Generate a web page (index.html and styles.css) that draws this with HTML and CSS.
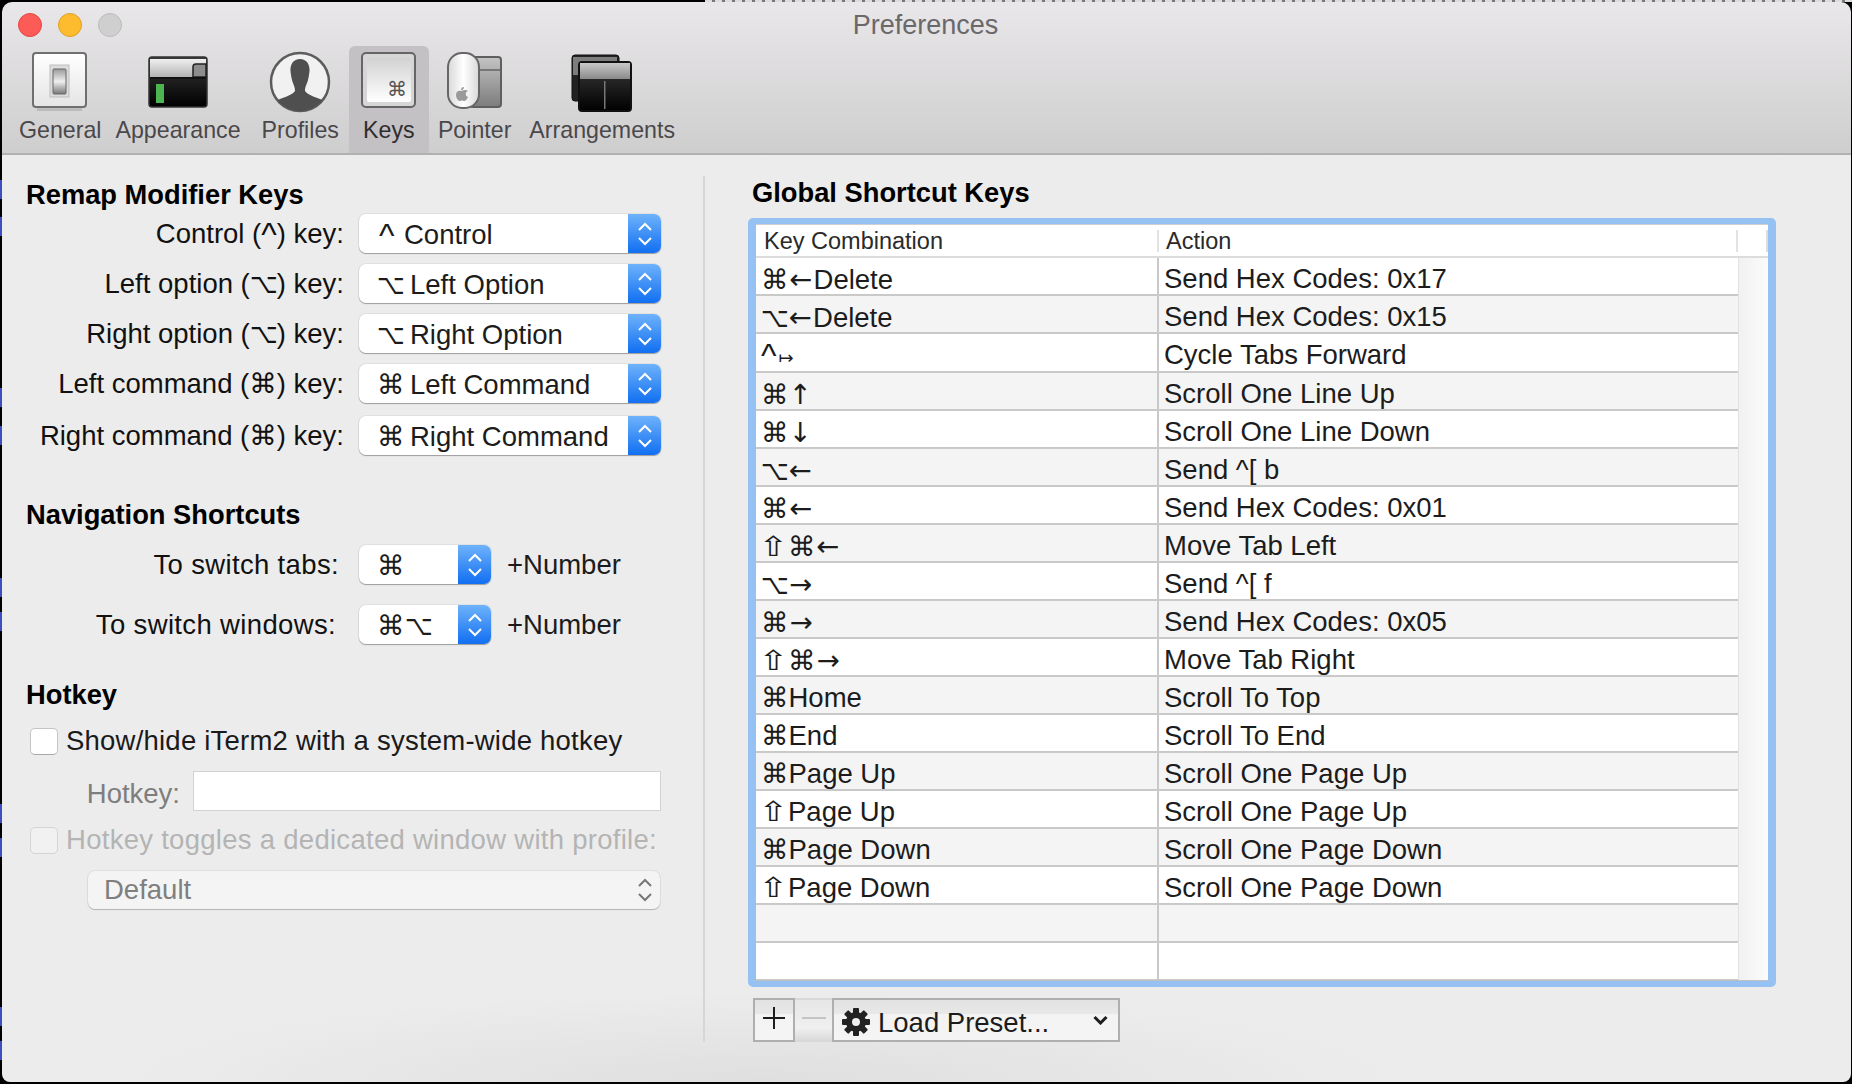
FILE: index.html
```html
<!DOCTYPE html>
<html lang="en">
<head>
  <meta charset="UTF-8">
  <title>Preferences</title>
  <link rel="stylesheet" href="styles.css">
</head>
<body>

<div class="desk-top"></div>

<div class="stage">
  <div class="desk-edge">
    <i style="margin-top:178px"></i>
    <i style="margin-top:18px"></i>
    <i style="margin-top:152px"></i>
    <i style="margin-top:19px"></i>
    <i style="margin-top:133px"></i>
    <i style="margin-top:15px"></i>
    <i style="margin-top:173px"></i>
    <i style="margin-top:15px"></i>
    <i style="margin-top:150px"></i>
    <i style="margin-top:15px"></i>
  </div>

  <div class="window">
    <header class="toolbar">
      <div class="titlebar">
        <div class="lights">
          <span class="light red"></span>
          <span class="light yellow"></span>
          <span class="light grey"></span>
        </div>
        <div class="title">Preferences</div>
      </div>

      <nav class="tools">
        <div class="tool">
          <svg class="tool-icon" width="56" height="62" viewBox="0 0 56 62">
            <defs>
              <linearGradient id="plate" x1="0" y1="0" x2="0" y2="1"><stop offset="0" stop-color="#fff"/><stop offset="1" stop-color="#e4e4e4"/></linearGradient>
              <linearGradient id="lever" x1="0" y1="0" x2="0" y2="1"><stop offset="0" stop-color="#9a9a9a"/><stop offset=".5" stop-color="#efefef"/><stop offset="1" stop-color="#777"/></linearGradient>
            </defs>
            <rect x="1" y="2" width="53" height="54" rx="3" fill="url(#plate)" stroke="#6f6f6f" stroke-width="2"/>
            <rect x="18" y="14" width="19" height="32" fill="#dcdcdc" stroke="#bdbdbd"/>
            <rect x="21" y="18" width="13" height="25" rx="1" fill="url(#lever)" stroke="#666"/>
            <rect x="5" y="57" width="45" height="3" fill="#000" opacity=".12"/>
          </svg>
          <span>General</span>
        </div>

        <div class="tool">
          <svg class="tool-icon" width="60" height="62" viewBox="0 0 60 62">
            <defs>
              <linearGradient id="termbar" x1="0" y1="0" x2="0" y2="1"><stop offset="0" stop-color="#f0f0f0"/><stop offset="1" stop-color="#b4b4b4"/></linearGradient>
              <linearGradient id="termbody" x1="0" y1="0" x2="0" y2="1"><stop offset="0" stop-color="#3a3a3a"/><stop offset="1" stop-color="#000"/></linearGradient>
            </defs>
            <rect x="1" y="6" width="58" height="50" rx="3" fill="url(#termbody)" stroke="#333" stroke-width="1.5"/>
            <rect x="2" y="8" width="56" height="18" fill="url(#termbar)"/>
            <path d="M45 26V16q0-3 3-3H58V26Z" fill="#8d8d8d" stroke="#222" stroke-width="1.5"/>
            <rect x="2" y="26" width="56" height="2" fill="#111"/>
            <rect x="8" y="33" width="8" height="19" fill="#4cb550"/>
          </svg>
          <span>Appearance</span>
        </div>

        <div class="tool tool-profiles">
          <svg class="tool-icon" width="62" height="62" viewBox="0 0 62 62">
            <defs>
              <clipPath id="oval"><ellipse cx="31" cy="31" rx="29" ry="29"/></clipPath>
            </defs>
            <ellipse cx="31" cy="31" rx="29" ry="29" fill="#f1f1f1" stroke="#5c5c5c" stroke-width="2.500"/>
            <g clip-path="url(#oval)">
              <path d="M31 8c-7 0-10 6-9.500 12 .3 3 1 7 1.500 9 1 4 3 6 3 11-3 4-10 6-15 8-3 1-5 5-6 14h52c-1-9-3-13-6-14-5-2-12-4-15-8 0-5 2-7 3-11 .5-2 1.200-6 1.500-9C41 14 38 8 31 8Z" fill="#4f4f4f"/>
            </g>
          </svg>
          <span>Profiles</span>
        </div>

        <div class="tool selected">
          <svg class="tool-icon" width="56" height="62" viewBox="0 0 56 62">
            <defs>
              <linearGradient id="keycap" x1="0" y1="0" x2="0" y2="1"><stop offset="0" stop-color="#d2d2d2"/><stop offset="1" stop-color="#fff"/></linearGradient>
            </defs>
            <rect x="1" y="2" width="53" height="54" rx="4" fill="#d6d6d6" stroke="#656565" stroke-width="2"/>
            <rect x="6" y="7" width="44" height="44" rx="2" fill="url(#keycap)"/>
            <text class="key-glyph" x="26" y="45">⌘</text>
          </svg>
          <span>Keys</span>
        </div>

        <div class="tool tool-pointer">
          <svg class="tool-icon" width="58" height="62" viewBox="0 0 58 62">
            <defs>
              <linearGradient id="mouse" x1="0" y1="0" x2="1" y2="0"><stop offset="0" stop-color="#d8d8d8"/><stop offset=".5" stop-color="#fff"/><stop offset="1" stop-color="#d8d8d8"/></linearGradient>
              <linearGradient id="back" x1="0" y1="0" x2="0" y2="1"><stop offset="0" stop-color="#c4c4c4"/><stop offset="1" stop-color="#7c7c7c"/></linearGradient>
            </defs>
            <rect x="24" y="6" width="31" height="50" rx="3" fill="url(#back)" stroke="#5f5f5f" stroke-width="2"/>
            <rect x="32" y="18" width="22" height="2" fill="#777"/>
            <rect x="2" y="2" width="31" height="55" rx="14" fill="url(#mouse)" stroke="#666" stroke-width="2"/>
            <path d="M15 40c-2-1-5 0-5 4 0 3 2 6 4 6 1 0 1-.5 2-.5s1 .5 2 .5c2 0 3-2 4-4-3-1-3-5 0-6-1-1-2-1-3-1-1 0-2 .5-3 .5zM15 39c0-2 1-3 3-3 0 2-1 3-3 3z" fill="#9a9a9a"/>
          </svg>
          <span>Pointer</span>
        </div>

        <div class="tool tool-arrange">
          <svg class="tool-icon" width="62" height="62" viewBox="0 0 62 62">
            <defs>
              <linearGradient id="front" x1="0" y1="0" x2="0" y2="1"><stop offset="0" stop-color="#3c3c3c"/><stop offset="1" stop-color="#000"/></linearGradient>
              <linearGradient id="frontbar" x1="0" y1="0" x2="0" y2="1"><stop offset="0" stop-color="#c9c9c9"/><stop offset="1" stop-color="#8a8a8a"/></linearGradient>
            </defs>
            <rect x="1" y="4" width="47" height="46" rx="3" fill="#222" stroke="#111"/>
            <rect x="2" y="6" width="44" height="18" fill="#7d7d7d"/>
            <rect x="8" y="11" width="52" height="49" rx="3" fill="url(#front)" stroke="#111" stroke-width="2"/>
            <rect x="9" y="12" width="50" height="16" fill="url(#frontbar)"/>
            <rect x="33" y="30" width="1.500" height="28" fill="#777"/>
          </svg>
          <span>Arrangements</span>
        </div>
      </nav>
    </header>

    <main class="content">
      <section class="left-col">
        <h3>Remap Modifier Keys</h3>
        <div class="form-row">
          <label class="row-label">Control (<span class="ctl">^</span>) key:</label>
          <div class="popup"><span class="popup-text"><span class="mod mod-ctl"><span class="ctl">^</span></span>Control</span><span class="stepper"><svg width="18" height="28" viewBox="0 0 18 28"><path d="M3 10l6-6 6 6M3 18l6 6 6-6"/></svg></span></div>
        </div>
        <div class="form-row">
          <label class="row-label">Left option (<span class="opt">⌥</span>) key:</label>
          <div class="popup"><span class="popup-text"><span class="mod"><span class="opt">⌥</span></span>Left Option</span><span class="stepper"><svg width="18" height="28" viewBox="0 0 18 28"><path d="M3 10l6-6 6 6M3 18l6 6 6-6"/></svg></span></div>
        </div>
        <div class="form-row">
          <label class="row-label">Right option (<span class="opt">⌥</span>) key:</label>
          <div class="popup"><span class="popup-text"><span class="mod"><span class="opt">⌥</span></span>Right Option</span><span class="stepper"><svg width="18" height="28" viewBox="0 0 18 28"><path d="M3 10l6-6 6 6M3 18l6 6 6-6"/></svg></span></div>
        </div>
        <div class="form-row">
          <label class="row-label">Left command (⌘) key:</label>
          <div class="popup"><span class="popup-text"><span class="mod">⌘</span>Left Command</span><span class="stepper"><svg width="18" height="28" viewBox="0 0 18 28"><path d="M3 10l6-6 6 6M3 18l6 6 6-6"/></svg></span></div>
        </div>
        <div class="form-row last">
          <label class="row-label">Right command (⌘) key:</label>
          <div class="popup"><span class="popup-text"><span class="mod">⌘</span>Right Command</span><span class="stepper"><svg width="18" height="28" viewBox="0 0 18 28"><path d="M3 10l6-6 6 6M3 18l6 6 6-6"/></svg></span></div>
        </div>

        <h3 class="nav-head">Navigation Shortcuts</h3>
        <div class="form-row nav-row">
          <label class="row-label tabs-label">To switch tabs:</label>
          <div class="popup small"><span class="popup-text">⌘</span><span class="stepper"><svg width="18" height="28" viewBox="0 0 18 28"><path d="M3 10l6-6 6 6M3 18l6 6 6-6"/></svg></span></div>
          <span class="suffix">+Number</span>
        </div>
        <div class="form-row nav-row">
          <label class="row-label windows-label">To switch windows:</label>
          <div class="popup small"><span class="popup-text">⌘<span class="opt">⌥</span></span><span class="stepper"><svg width="18" height="28" viewBox="0 0 18 28"><path d="M3 10l6-6 6 6M3 18l6 6 6-6"/></svg></span></div>
          <span class="suffix">+Number</span>
        </div>

        <h3 class="hotkey-head">Hotkey</h3>
        <div class="check-row">
          <span class="checkbox"></span>
          <span>Show/hide iTerm2 with a system-wide hotkey</span>
        </div>
        <div class="hotkey-row">
          <label class="hotkey-label">Hotkey:</label>
          <div class="hotkey-field"></div>
        </div>
        <div class="check-row disabled">
          <span class="checkbox"></span>
          <span>Hotkey toggles a dedicated window with profile:</span>
        </div>
        <div class="profile-select">
          <span>Default</span>
          <svg width="18" height="28" viewBox="0 0 18 28"><path d="M3 10l6-6 6 6M3 18l6 6 6-6"/></svg>
        </div>
      </section>

      <section class="right-col">
        <h3>Global Shortcut Keys</h3>
        <div class="focus-box">
          <div class="list-head">
            <span class="head-key">Key Combination</span>
            <span class="head-action">Action</span>
            <span class="head-end"></span>
          </div>
          <div class="list-body">
            <table class="keys-table">
              <tr><td>⌘<span class="arrow">←</span>Delete</td><td>Send Hex Codes: 0x17</td></tr>
              <tr><td><span class="opt">⌥</span><span class="arrow">←</span>Delete</td><td>Send Hex Codes: 0x15</td></tr>
              <tr><td><span class="ctl">^</span><span class="tab-arrow">↦</span></td><td>Cycle Tabs Forward</td></tr>
              <tr><td>⌘<span class="arrow vert">↑</span></td><td>Scroll One Line Up</td></tr>
              <tr><td>⌘<span class="arrow vert">↓</span></td><td>Scroll One Line Down</td></tr>
              <tr><td><span class="opt">⌥</span><span class="arrow">←</span></td><td>Send ^[ b</td></tr>
              <tr><td>⌘<span class="arrow">←</span></td><td>Send Hex Codes: 0x01</td></tr>
              <tr><td><span class="shift">⇧</span>⌘<span class="arrow">←</span></td><td>Move Tab Left</td></tr>
              <tr><td><span class="opt">⌥</span><span class="arrow">→</span></td><td>Send ^[ f</td></tr>
              <tr><td>⌘<span class="arrow">→</span></td><td>Send Hex Codes: 0x05</td></tr>
              <tr><td><span class="shift">⇧</span>⌘<span class="arrow">→</span></td><td>Move Tab Right</td></tr>
              <tr><td>⌘Home</td><td>Scroll To Top</td></tr>
              <tr><td>⌘End</td><td>Scroll To End</td></tr>
              <tr><td>⌘Page Up</td><td>Scroll One Page Up</td></tr>
              <tr><td><span class="shift">⇧</span>Page Up</td><td>Scroll One Page Up</td></tr>
              <tr><td>⌘Page Down</td><td>Scroll One Page Down</td></tr>
              <tr><td><span class="shift">⇧</span>Page Down</td><td>Scroll One Page Down</td></tr>
              <tr><td></td><td></td></tr>
              <tr><td></td><td></td></tr>
            </table>
            <div class="scroll-track"></div>
          </div>
        </div>

        <div class="button-bar">
          <button class="bar-btn plus" type="button">
            <svg width="24" height="24" viewBox="0 0 24 24"><path d="M12 1v22M1 12h22"/></svg>
          </button>
          <button class="bar-btn minus" type="button">
            <svg width="24" height="24" viewBox="0 0 24 24"><path d="M0 12h24"/></svg>
          </button>
          <button class="bar-btn preset" type="button">
            <svg class="gear" width="28" height="28" viewBox="0 0 28 28">
              <g fill="#222">
                <rect x="11" y="0" width="6" height="28" rx="1"/>
                <rect x="11" y="0" width="6" height="28" rx="1" transform="rotate(45 14 14)"/>
                <rect x="11" y="0" width="6" height="28" rx="1" transform="rotate(90 14 14)"/>
                <rect x="11" y="0" width="6" height="28" rx="1" transform="rotate(135 14 14)"/>
              </g>
              <circle cx="14" cy="14" r="7.500" fill="none" stroke="#222" stroke-width="5"/>
              <circle cx="14" cy="14" r="4" fill="#efefef"/>
            </svg>
            <span class="preset-text">Load Preset...</span>
            <svg class="caret" width="15" height="10" viewBox="0 0 15 10"><path d="M1.500 2l6 6 6-6"/></svg>
          </button>
        </div>
      </section>
    </main>
  </div>
</div>

</body>
</html>
```

FILE: styles.css
```css
html, body {
  margin: 0;
  height: 100%;
}
body {
  width: 1852px;
  height: 1084px;
  overflow: hidden;
  background: #000;
  font-family: 'Liberation Sans', 'DejaVu Sans', sans-serif;
  font-size: 27.5px;
  color: #1c1c1c;
}
.desk-top {
  height: 2px;
  margin-left: 705px;
  background: repeating-linear-gradient(90deg, #dcdcdc 0, #dcdcdc 7px, #777 7px, #777 10px);
}
.stage {
  display: flex;
  height: 1080px;
}
.desk-edge {
  width: 2px;
  display: flex;
  flex-direction: column;
}
.desk-edge i {
  display: block;
  height: 19px;
  background: #3d4fc0;
  flex: none;
}
.window {
  width: 1849px;
  height: 1080px;
  border-radius: 10px 10px 8px 8px;
  overflow: hidden;
  display: flex;
  flex-direction: column;
}

/* toolbar */
.toolbar {
  height: 154px;
  box-sizing: border-box;
  background: linear-gradient(#e9e7e9, #cfcecf);
  border-bottom: 2px solid #b2b1b2;
  display: flex;
  flex-direction: column;
}
.titlebar {
  display: grid;
  grid-template-columns: 1fr auto 1fr;
  align-items: center;
  height: 44px;
}
.lights {
  display: flex;
  gap: 16px;
  padding-left: 16px;
}
.light {
  width: 24px;
  height: 24px;
  border-radius: 50%;
  box-sizing: border-box;
}
.red { background: #fc5b57; border: 1px solid #e2463f; }
.yellow { background: #fdbb2e; border: 1px solid #e0a028; }
.grey { background: #d0cfd0; border: 1px solid #bcbbbc; }
.title {
  font-size: 27px;
  line-height: 46px;
  color: #6a686a;
  text-align: center;
  grid-column: 2;
  margin-left: -2px;
}
.tools {
  flex: 1;
  display: flex;
  padding-left: 10px;
}
.tool {
  display: flex;
  flex-direction: column;
  align-items: center;
  padding: 5px 7px 0;
  font-size: 23.2px;
  color: #4a484a;
}
.tool-icon {
  display: block;
  height: 62px;
  margin-bottom: 3px;
}
.tool span {
  line-height: 28px;
}
.tool-profiles { margin-left: 7px; }
.tool-pointer { margin-left: 2px; }
.tool-arrange { margin-left: 4px; }
.tool.selected {
  width: 80px;
  box-sizing: border-box;
  padding: 5px 0 0;
  margin-left: 3px;
  background: #c3c1c3;
  border-radius: 6px 6px 0 0;
  color: #2f2d2f;
}
.key-glyph {
  font-family: 'DejaVu Sans', sans-serif;
  font-size: 20px;
  fill: #555;
}

/* main area */
.content {
  flex: 1;
  display: flex;
  padding: 21px 0 40px;
  background: radial-gradient(ellipse 640px 90px at 760px 100%, #dfdfdf, rgba(223,223,223,0)), #ececec;
}
h3 {
  margin: 0;
  font-size: 27.3px;
  line-height: 34px;
  color: #000;
}

/* modifier glyphs */
.opt {
  display: inline-block;
  width: 31px;
  margin-right: -4px;
  transform: scaleX(.88);
  transform-origin: left;
}
.ctl {
  display: inline-block;
  font-size: 33px;
  line-height: 20px;
  vertical-align: -3px;
}
.shift {
  display: inline-block;
  width: 23px;
  margin: 0 7px 0 -3px;
  transform: scaleX(1.3);
  transform-origin: left;
}
.arrow {
  font-family: 'DejaVu Sans', sans-serif;
  margin-left: 1px;
  margin-right: 1px;
}
.arrow.vert {
  margin-left: 0;
}
.mod {
  display: inline-block;
  width: 33px;
}
.mod-ctl {
  width: 27px;
  padding-left: 2px;
  box-sizing: border-box;
}

/* left column */
.left-col {
  width: 703px;
  box-sizing: border-box;
  padding-left: 24px;
  padding-top: 2px;
  border-right: 2px solid #d6d6d6;
}
.form-row {
  display: flex;
  align-items: center;
  height: 39px;
  margin-top: 11px;
}
.left-col h3 + .form-row {
  margin-top: 2px;
}
.form-row.last {
  margin-top: 13px;
}
.row-label {
  width: 318px;
  text-align: right;
  margin-right: 15px;
  color: #111;
  white-space: nowrap;
  line-height: 43px;
}
.popup {
  width: 302px;
  height: 39px;
  box-sizing: border-box;
  display: flex;
  background: #fff;
  border-radius: 7px;
  box-shadow: 0 1px 1px rgba(0,0,0,0.3), 0 0 0 1px rgba(0,0,0,0.05);
  overflow: hidden;
}
.popup-text {
  flex: 1;
  padding-left: 18px;
  line-height: 41px;
  white-space: nowrap;
}
.stepper {
  width: 33px;
  display: flex;
  align-items: center;
  justify-content: center;
  background: linear-gradient(#6eb2fb, #116ff1);
}
.stepper svg path {
  fill: none;
  stroke: #fff;
  stroke-width: 2;
}
.nav-head {
  margin-top: 43px;
}
.nav-row {
  margin-top: 21px;
}
.left-col .nav-head + .nav-row {
  margin-top: 13px;
}
.tabs-label {
  width: 313px;
  margin-right: 20px;
  letter-spacing: .35px;
}
.windows-label {
  width: 310px;
  margin-right: 23px;
  letter-spacing: .35px;
}
.popup.small {
  width: 132px;
}
.suffix {
  margin-left: 16px;
  line-height: 41px;
}
.hotkey-head {
  margin-top: 34px;
}
.check-row {
  display: flex;
  align-items: center;
  gap: 8px;
  height: 28px;
  margin: 15px 0 0 4px;
  color: #1a1a1a;
  white-space: nowrap;
  letter-spacing: .22px;
  line-height: 30px;
}
.checkbox {
  width: 28px;
  height: 27px;
  box-sizing: border-box;
  background: #fff;
  border: 1px solid #c4c4c4;
  border-bottom-color: #a8a8a8;
  border-radius: 5px;
}
.hotkey-row {
  display: flex;
  margin-top: 16px;
}
.hotkey-label {
  width: 154px;
  height: 40px;
  text-align: right;
  margin-right: 13px;
  color: #7e7e7e;
  line-height: 46px;
}
.hotkey-field {
  width: 468px;
  height: 40px;
  box-sizing: border-box;
  background: #fff;
  border: 1px solid #d2d2d2;
}
.check-row.disabled {
  margin-top: 15px;
  color: #b4b4b4;
  letter-spacing: .28px;
}
.check-row.disabled .checkbox {
  background: #f1f1f1;
  border-color: #d4d4d4;
}
.profile-select {
  display: flex;
  align-items: center;
  justify-content: space-between;
  width: 572px;
  height: 38px;
  box-sizing: border-box;
  margin: 17px 0 0 62px;
  padding: 0 6px 0 16px;
  color: #7f7f7f;
  background: #f4f4f4;
  border-radius: 7px;
  box-shadow: 0 1px 1px rgba(0,0,0,0.2), 0 0 0 1px rgba(0,0,0,0.05);
}
.profile-select span {
  line-height: 40px;
}
.profile-select path {
  fill: none;
  stroke: #777;
  stroke-width: 2;
}

/* right column */
.right-col {
  margin-left: 43px;
  width: 1028px;
}
.right-col h3 {
  margin: 0 0 0 4px;
  height: 42px;
  line-height: 34px;
}
.focus-box {
  height: 769px;
  box-sizing: border-box;
  border: solid #95c2f3;
  border-width: 6px 8px 6px 8px;
  border-radius: 5px;
  background: #fff;
  display: flex;
  flex-direction: column;
  overflow: hidden;
}
.list-head {
  height: 34px;
  flex: none;
  box-sizing: border-box;
  display: flex;
  align-items: center;
  border-top: 1px solid #cfcfcf;
  border-bottom: 2px solid #dcdcdc;
  font-size: 23.5px;
  color: #2a2a2a;
}
.head-key {
  width: 403px;
  padding-left: 8px;
  box-sizing: border-box;
  border-right: 2px solid #e2e2e2;
  line-height: 22px;
  height: 22px;
}
.head-action {
  width: 579px;
  box-sizing: border-box;
  padding-left: 7px;
  border-right: 2px solid #e2e2e2;
  line-height: 22px;
  height: 22px;
}
.head-end {
  width: 30px;
  height: 22px;
  box-sizing: border-box;
  border-right: 2px solid #dcdcdc;
}
.list-body {
  flex: 1;
  display: flex;
  overflow: hidden;
  border-bottom: 1px solid #c0c0c0;
}
.keys-table {
  width: 982px;
  table-layout: fixed;
  border-collapse: separate;
  border-spacing: 0;
  align-self: flex-start;
}
.keys-table td {
  height: 38px;
  padding: 8px 0 0 5px;
  box-sizing: border-box;
  border-bottom: 2px solid #c9c9c9;
  white-space: nowrap;
  line-height: 26px;
  vertical-align: top;
}
.keys-table td:first-child {
  width: 403px;
  padding-left: 5px;
  border-right: 2px solid #c9c9c9;
}
.keys-table tr:nth-child(even) td {
  background: #f4f4f4;
}
.tab-arrow {
  font-family: 'DejaVu Sans', sans-serif;
  font-size: 18px;
  margin-left: 2px;
}
.scroll-track {
  flex: 1;
  background: linear-gradient(90deg, #f1f1f1, #fbfbfb);
  border-left: 1px solid #e2e2e2;
}
.button-bar {
  display: flex;
  margin: 11px 0 0 5px;
  height: 44px;
}
.bar-btn {
  display: flex;
  align-items: center;
  box-sizing: border-box;
  height: 44px;
  padding: 0;
  font: inherit;
  color: #1c1c1c;
  background: linear-gradient(#e2e2e2 0, #e8e8e8 35%, #f3f3f3 36%, #f4f4f4 100%);
  border: 2px solid #afafaf;
}
.bar-btn svg path {
  fill: none;
  stroke: #1e1e1e;
  stroke-width: 2;
}
.plus {
  width: 42px;
  justify-content: center;
}
.plus svg, .minus svg {
  margin-top: -5px;
}
.minus {
  width: 37px;
  justify-content: center;
  border-width: 2px 0;
  border-color: #d8d8d8;
  background: linear-gradient(#e6e6e6, #f0f0f0 70%, #dadada);
}
.bar-btn.minus svg path {
  stroke: #c4c4c4;
}
.preset {
  width: 288px;
  padding-left: 8px;
}
.gear {
  flex: none;
  margin-top: 3px;
}
.preset-text {
  margin-left: 8px;
  padding-top: 5px;
  flex: 1;
  text-align: left;
}
.bar-btn .caret {
  margin-right: 10px;
}
.bar-btn .caret path {
  stroke-width: 3;
}
```
